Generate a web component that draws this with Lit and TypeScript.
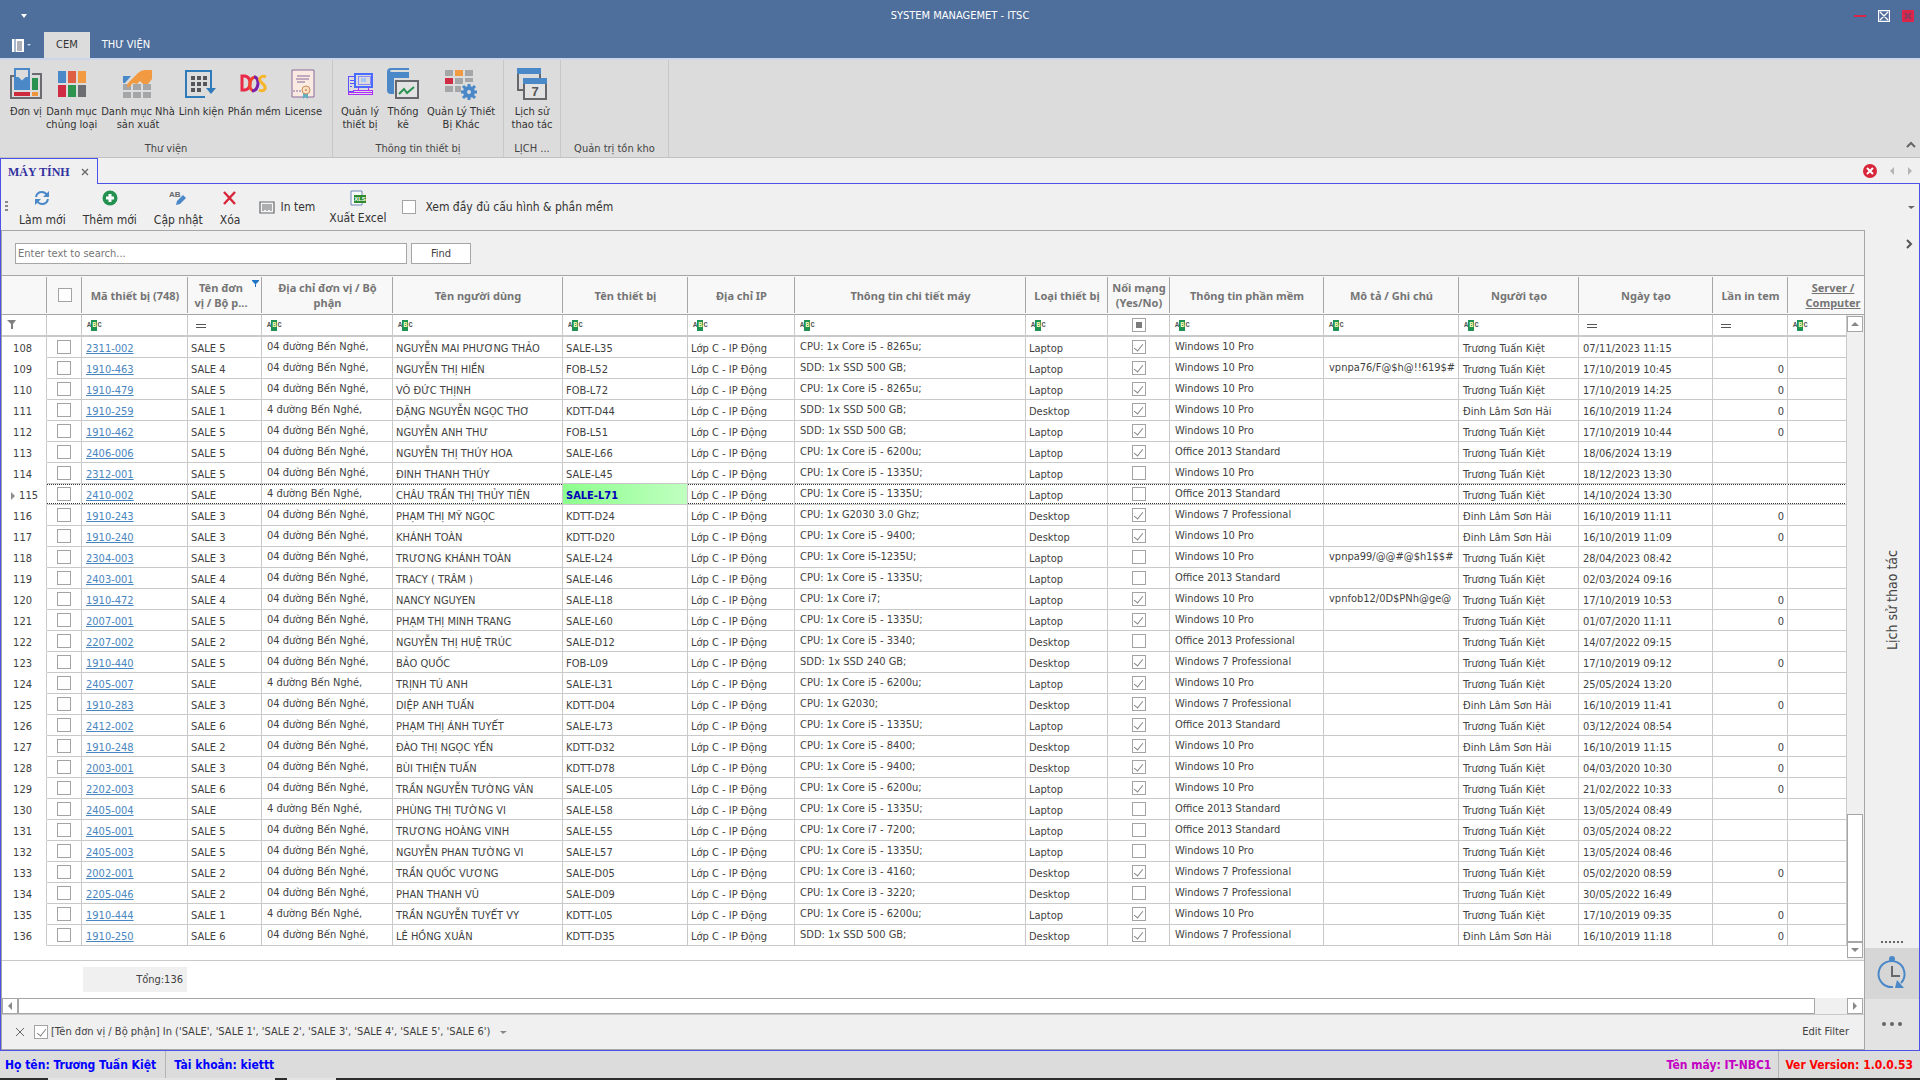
import { LitElement, html, css, svg, nothing } from "lit";
import { customElement } from "lit/decorators.js";
import { classMap } from "lit/directives/class-map.js";

interface Device {
  no: number; code: string; unit: string; addr: string; user: string; name: string;
  spec: string; kind: string; net: boolean; soft: string; note: string; by: string; at: string; prints: string;
}

const KIET = "Trương Tuấn Kiệt";
const HAI = "Đinh Lâm Sơn Hải";
const W10 = "Windows 10 Pro";
const W7 = "Windows 7 Professional";
const O13S = "Office 2013 Standard";
const O13P = "Office 2013 Professional";

type Raw = [string, string, string, string, string, string, string, number, string, string, string, string, string];
const RAW: Raw[] = [
  ["2311-002", "SALE 5", "04", "NGUYỄN MAI PHƯƠNG THẢO", "SALE-L35", "CPU: 1x Core i5 - 8265u;", "Laptop", 1, W10, "", KIET, "07/11/2023 11:15", ""],
  ["1910-463", "SALE 4", "04", "NGUYỄN THỊ HIỀN", "FOB-L52", "SDD: 1x SSD 500 GB;", "Laptop", 1, W10, "vpnpa76/F@$h@!!619$#", KIET, "17/10/2019 10:45", "0"],
  ["1910-479", "SALE 5", "04", "VÕ ĐỨC THỊNH", "FOB-L72", "CPU: 1x Core i5 - 8265u;", "Laptop", 1, W10, "", KIET, "17/10/2019 14:25", "0"],
  ["1910-259", "SALE 1", "4", "ĐẶNG NGUYỄN NGỌC THƠ", "KDTT-D44", "SDD: 1x SSD 500 GB;", "Desktop", 1, W10, "", HAI, "16/10/2019 11:24", "0"],
  ["1910-462", "SALE 5", "04", "NGUYỄN ANH THƯ", "FOB-L51", "SDD: 1x SSD 500 GB;", "Laptop", 1, W10, "", KIET, "17/10/2019 10:44", "0"],
  ["2406-006", "SALE 5", "04", "NGUYỄN THỊ THÚY HOA", "SALE-L66", "CPU: 1x Core i5 - 6200u;", "Laptop", 1, O13S, "", KIET, "18/06/2024 13:19", ""],
  ["2312-001", "SALE 5", "04", "ĐINH THANH THÚY", "SALE-L45", "CPU: 1x Core i5 - 1335U;", "Laptop", 0, W10, "", KIET, "18/12/2023 13:30", ""],
  ["2410-002", "SALE", "4", "CHÂU TRẦN THỊ THỦY TIÊN", "SALE-L71", "CPU: 1x Core i5 - 1335U;", "Laptop", 0, O13S, "", KIET, "14/10/2024 13:30", ""],
  ["1910-243", "SALE 3", "04", "PHẠM THỊ MỸ NGỌC", "KDTT-D24", "CPU: 1x G2030 3.0 Ghz;", "Desktop", 1, W7, "", HAI, "16/10/2019 11:11", "0"],
  ["1910-240", "SALE 3", "04", "KHÁNH TOÀN", "KDTT-D20", "CPU: 1x Core i5 - 9400;", "Desktop", 1, W10, "", HAI, "16/10/2019 11:09", "0"],
  ["2304-003", "SALE 3", "04", "TRƯƠNG KHÁNH TOÀN", "SALE-L24", "CPU: 1x Core i5-1235U;", "Laptop", 0, W10, "vpnpa99/@@#@$h1$$#", KIET, "28/04/2023 08:42", ""],
  ["2403-001", "SALE 4", "04", "TRACY ( TRÂM )", "SALE-L46", "CPU: 1x Core i5 - 1335U;", "Laptop", 0, O13S, "", KIET, "02/03/2024 09:16", ""],
  ["1910-472", "SALE 4", "04", "NANCY NGUYEN", "SALE-L18", "CPU: 1x Core i7;", "Laptop", 1, W10, "vpnfob12/0D$PNh@ge@", KIET, "17/10/2019 10:53", "0"],
  ["2007-001", "SALE 5", "04", "PHẠM THỊ MINH TRANG", "SALE-L60", "CPU: 1x Core i5 - 1335U;", "Laptop", 1, W10, "", KIET, "01/07/2020 11:11", "0"],
  ["2207-002", "SALE 2", "04", "NGUYỄN THỊ HUỆ TRÚC", "SALE-D12", "CPU: 1x Core i5 - 3340;", "Desktop", 0, O13P, "", KIET, "14/07/2022 09:15", ""],
  ["1910-440", "SALE 5", "04", "BẢO QUỐC", "FOB-L09", "SDD: 1x SSD 240 GB;", "Desktop", 1, W7, "", KIET, "17/10/2019 09:12", "0"],
  ["2405-007", "SALE", "4", "TRỊNH TÚ ANH", "SALE-L31", "CPU: 1x Core i5 - 6200u;", "Laptop", 1, W10, "", KIET, "25/05/2024 13:20", ""],
  ["1910-283", "SALE 3", "04", "DIỆP ANH TUẤN", "KDTT-D04", "CPU: 1x G2030;", "Desktop", 1, W7, "", HAI, "16/10/2019 11:41", "0"],
  ["2412-002", "SALE 6", "04", "PHẠM THỊ ÁNH TUYẾT", "SALE-L73", "CPU: 1x Core i5 - 1335U;", "Laptop", 1, O13S, "", KIET, "03/12/2024 08:54", ""],
  ["1910-248", "SALE 2", "04", "ĐÀO THỊ NGỌC YẾN", "KDTT-D32", "CPU: 1x Core i5 - 8400;", "Desktop", 1, W10, "", HAI, "16/10/2019 11:15", "0"],
  ["2003-001", "SALE 3", "04", "BÙI THIỆN TUẤN", "KDTT-D78", "CPU: 1x Core i5 - 9400;", "Desktop", 1, W10, "", KIET, "04/03/2020 10:30", "0"],
  ["2202-003", "SALE 6", "04", "TRẦN NGUYỄN TƯỜNG VÂN", "SALE-L05", "CPU: 1x Core i5 - 6200u;", "Laptop", 1, W10, "", KIET, "21/02/2022 10:33", "0"],
  ["2405-004", "SALE", "4", "PHÙNG THỊ TƯỜNG VI", "SALE-L58", "CPU: 1x Core i5 - 1335U;", "Laptop", 0, O13S, "", KIET, "13/05/2024 08:49", ""],
  ["2405-001", "SALE 5", "04", "TRƯƠNG HOÀNG VINH", "SALE-L55", "CPU: 1x Core i7 - 7200;", "Laptop", 0, O13S, "", KIET, "03/05/2024 08:22", ""],
  ["2405-003", "SALE 5", "04", "NGUYỄN PHAN TƯỜNG VI", "SALE-L57", "CPU: 1x Core i5 - 1335U;", "Laptop", 0, W10, "", KIET, "13/05/2024 08:46", ""],
  ["2002-001", "SALE 2", "04", "TRẦN QUỐC VƯƠNG", "SALE-D05", "CPU: 1x Core i3 - 4160;", "Desktop", 1, W7, "", KIET, "05/02/2020 08:59", "0"],
  ["2205-046", "SALE 2", "04", "PHAN THANH VŨ", "SALE-D09", "CPU: 1x Core i3 - 3220;", "Desktop", 0, W7, "", KIET, "30/05/2022 16:49", ""],
  ["1910-444", "SALE 1", "4", "TRẦN NGUYỄN TUYẾT VY", "KDTT-L05", "CPU: 1x Core i5 - 6200u;", "Laptop", 1, W10, "", KIET, "17/10/2019 09:35", "0"],
  ["1910-250", "SALE 6", "04", "LÊ HỒNG XUÂN", "KDTT-D35", "SDD: 1x SSD 500 GB;", "Desktop", 1, W7, "", HAI, "16/10/2019 11:18", "0"],
];
const DEVICES: Device[] = RAW.map((r, i) => ({
  no: 108 + i, code: r[0], unit: r[1], addr: `${r[2]} đường Bến Nghé,`, user: r[3], name: r[4], spec: r[5],
  kind: r[6], net: !!r[7], soft: r[8], note: r[9], by: r[10], at: r[11], prints: r[12],
}));
const CURRENT = 115;

const icon = (w: number, h: number, body: unknown) =>
  html`<svg width=${w} height=${h} viewBox="0 0 ${w} ${h}" aria-hidden="true">${body}</svg>`;

const ICONS = {
  unit: icon(32, 32, svg`
    <path d="M5 8H1v22h30V6h-9" fill="none" stroke="#6a6c70" stroke-width="2"/>
    <path d="M4 10h3l5 4 5-4h3v12H4z" fill="#4a88c8"/>
    <path d="M5 1h14v9h-3l-4 4-4-4H5z" fill="#dcdcdc" stroke="#4a88c8" stroke-width="2"/>
    <path d="M22 10h6v12h-6z" fill="#2a9250"/><path d="M4 24h16v4H4z" fill="#cf2b3f"/><path d="M22 24h6v4h-6z" fill="#f0953c"/>`),
  category: icon(28, 28, svg`
    <path d="M0 1h8v12H0z" fill="#4a88c8"/><path d="M10 1h8v12h-8z" fill="#de5f43"/><path d="M20 1h8v12h-8z" fill="#f29a42"/>
    <path d="M0 15h8v12H0z" fill="#cf2b43"/><path d="M10 15h8v12h-8z" fill="#2e9550"/><path d="M20 15h8v12h-8z" fill="#6b6d70"/>`),
  maker: icon(32, 30, svg`
    <path d="M1 7h8L3 14H1z" fill="#4a88c8"/>
    <path d="M1 15h8v6H1zM11 15h8v6h-8zM21 15h8v6h-8zM1 23h8v6H1zM11 23h8v6h-8zM21 23h8v6h-8z" fill="#a5a6a8"/>
    <path d="M5 17q0-2 2-4L16 4q3-3 7-3h7v9l-4 5h-5l-3-3-3 3-4-1-4 4q-2 1-2-1z" fill="#f29a42"/>`),
  part: icon(32, 28, svg`
    <path d="M20 27H1V1h25v19" fill="none" stroke="#2f7ab8" stroke-width="2"/><path d="M21 18h10l-5 6z" fill="#2f7ab8"/>
    <path d="M6 6h4v4H6zM12 6h4v4h-4zM18 6h4v4h-4zM6 12h4v4H6zM12 12h4v4h-4zM18 12h4v4h-4zM6 18h4v4H6zM12 18h4v4h-4z" fill="#55565a"/>`),
  software: icon(28, 20, svg`
    <g fill="none" stroke-width="3"><path d="M2 2v14h3q5-1 5-7t-5-7z" stroke="#e82a48"/>
    <path d="M16 3q-5 0-6 6-1 7 4 8" stroke="#f0452c"/><path d="M12 17q5 0 6-7 0-7-4-7" stroke="#7a1fa8"/>
    <path d="M26 3q-4-2-6 1-1 3 2 5 4 3 3 6-2 3-6 1" stroke="#f7b52c"/></g>`),
  license: icon(24, 30, svg`
    <path d="M1 1h22v27H1z" fill="#f9ebe2" stroke="#8a6a9a"/><path d="M6 7h13M5 10h13M6 13h8" stroke="#8a6a9a"/>
    <path d="M2 22h9" stroke="#8a6a9a" stroke-dasharray="2 1"/><path d="M12 24h5v6l-3-2-2 2z" fill="#5fb0c4"/>
    <circle cx="15" cy="21" r="4" fill="#fbe0c4" stroke="#c98f5c"/><circle cx="15" cy="21" r="1" fill="#c98f5c"/>`),
  manage: icon(28, 24, svg`
    <g fill="none" shape-rendering="crispEdges"><path d="M8 4H2v15h6M4 8h4M4 11h4M4 14h2" stroke="#5b50ff" stroke-width="1"/>
    <path d="M9 2h17v13H9z" stroke="#4a6bff" stroke-width="2"/><path d="M12 4h12v8H12z" stroke="#8a8aff"/>
    <path d="M12 15v3M22 15v3M7 18h19v4H2v-2h24" stroke="#b02cff" stroke-width="1"/></g><path d="M15 6h5v4h-5z" fill="#a8c4f4"/>`),
  stats: icon(32, 32, svg`
    <path d="M0 4q0-4 4-4h18v2H5q-2 0-2 1t2 1h17v6H7v16H4q-4 0-4-4z" fill="#4a88c8"/>
    <path d="M9 13h22v17H9z" fill="#e2e2e2" stroke="#65676b" stroke-width="2"/>
    <path d="M12 26l5-5 3 4 7-6" fill="none" stroke="#2a9250" stroke-width="2"/>`),
  other: icon(32, 32, svg`
    <path d="M0 2h8v6H0zM20 2h8v6h-8zM10 10h8v6h-8zM20 10h8v4h-8zM0 18h8v6H0zM10 18h6v6h-6z" fill="#a5a6a8"/>
    <path d="M10 2h8v6h-8z" fill="#f29a42"/><path d="M0 10h8v6H0z" fill="#cf2b43"/>
    <g stroke="#4a88c8" fill="none"><circle cx="24" cy="24" r="4" stroke-width="4"/>
    <path d="M24 16v4M24 28v4M16 24h4M28 24h4M18 18l3 3M27 27l3 3M30 18l-3 3M21 27l-3 3" stroke-width="3"/></g>`),
  history: icon(32, 32, svg`
    <path d="M2 6v16h7M24 6v4" fill="none" stroke="#65676b" stroke-width="2"/><path d="M1 0h24v6H1z" fill="#4a88c8"/>
    <path d="M8 13h22v18H8z" fill="#e2e2e2" stroke="#65676b" stroke-width="2"/><path d="M7 10h24v6H7z" fill="#4a88c8"/>
    <text x="19" y="28" text-anchor="middle" font-family="Liberation Sans" font-weight="700" font-size="13" fill="#55565a">7</text>`),
  refresh: icon(16, 16, svg`
    <g fill="none" stroke="#4a88c8" stroke-width="2"><path d="M2 7q1-5 6-5 3 0 5 3"/><path d="M14 9q-1 5-6 5-3 0-5-3"/></g>
    <path d="M15 1v6H9zM1 15V9h6z" fill="#4a88c8"/>`),
  add: icon(16, 16, svg`<circle cx="8" cy="8" r="7.5" fill="#239150"/><path d="M8 4v8M4 8h8" stroke="#fff" stroke-width="3"/>`),
  edit: icon(18, 16, svg`
    <text x="0" y="7" font-family="Liberation Sans" font-weight="700" font-size="8" fill="#66686c">AB</text>
    <path d="M7 15l1-4 6-6 3 3-6 6z" fill="#4a88c8"/>`),
  remove: icon(14, 16, svg`<path d="M1 2l11 12M12 2L1 14" stroke="#d8253a" stroke-width="2.4"/>`),
  barcode: icon(16, 13, svg`
    <path d="M1 1h14v11H1z" fill="#f4f4f4" stroke="#66686c" stroke-width="1.2"/><path d="M4 3v7M6 3v6M8 3v7M10 3v6M12 3v7" stroke="#66686c"/>`),
  excel: icon(16, 16, svg`
    <path d="M1 1h11v14H1z" fill="#fbfbfb" stroke="#6f86b4"/><path d="M4 5h12v8H4z" fill="#2e8b2e"/>
    <text x="10" y="11" text-anchor="middle" font-family="Liberation Sans" font-weight="700" font-size="6" fill="#fff">XLS</text>`),
  clock: icon(32, 34, svg`
    <path d="M17 31a13 13 0 1 1 8-4" fill="none" stroke="#4a88c8" stroke-width="2"/>
    <circle cx="16" cy="3" r="3" fill="#4a88c8"/><path d="M19 32l9 0-7-8z" fill="#4a88c8"/>
    <path d="M16 10v10h8" fill="none" stroke="#66686c" stroke-width="2"/>`),
};

const caret = (dir: "up" | "down" | "left" | "right") => {
  const d = { up: "M0 6h8L4 2z", down: "M0 2h8L4 6z", left: "M6 0v8L2 4z", right: "M2 0v8l4-4z" }[dir];
  return icon(8, 8, svg`<path d=${d} fill="currentColor"/>`);
};

const GROUPS: { label: string; cls: string; items: [unknown, string[]][] }[] = [
  { label: "Thư viện", cls: "g-lib", items: [
    [ICONS.unit, ["Đơn vị"]], [ICONS.category, ["Danh mục", "chủng loại"]], [ICONS.maker, ["Danh mục Nhà", "sản xuất"]],
    [ICONS.part, ["Linh kiện"]], [ICONS.software, ["Phần mềm"]], [ICONS.license, ["License"]]] },
  { label: "Thông tin thiết bị", cls: "g-info", items: [
    [ICONS.manage, ["Quản lý", "thiết bị"]], [ICONS.stats, ["Thống", "kê"]], [ICONS.other, ["Quản Lý Thiết", "Bị Khác"]]] },
  { label: "LỊCH ...", cls: "g-hist", items: [[ICONS.history, ["Lịch sử", "thao tác"]]] },
  { label: "Quản trị tồn kho", cls: "g-stock", items: [] },
];

const COLS = ["c-ind", "c-chk", "c-code", "c-unit", "c-addr", "c-user", "c-name", "c-ip", "c-spec", "c-kind", "c-net", "c-soft", "c-note", "c-by", "c-at", "c-prn", "c-srv", "c-bar"];

@customElement("app-root")
export class AppRoot extends LitElement {
  static styles = css`
    :host { display: block; font: 11px/16px "DejaVu Sans Condensed", "Noto Sans", sans-serif; color: #3f3f3f; }
    * { box-sizing: border-box; }
    svg { display: block; flex: none; }
    button { font: inherit; color: inherit; background: none; border: 0; padding: 0; cursor: default; }
    .app { min-height: 100vh; display: flex; flex-direction: column; background: #f0f0f0; }
    .row { display: flex; align-items: center; }
    .grow { flex: 1; }

    .title { height: 32px; background: #4e6e9c; color: #fff; display: grid; grid-template-columns: 1fr auto 1fr; align-items: center; padding: 0 6px; }
    .title h1 { margin: 0; font: inherit; }
    .custom { justify-self: start; padding: 0 14px; }
    .wins { justify-content: flex-end; gap: 12px; }
    .tabs { height: 26px; background: #4e6e9c; color: #fff; display: flex; align-items: stretch; }
    .filemenu { width: 44px; display: flex; align-items: center; gap: 3px; padding-left: 12px; }
    .tab { padding: 0 12px; }
    .tab.on { background: #dcdcdc; color: #333; }
    .ribbon { display: flex; height: 100px; background: #dcdcdc; border-top: 2px solid #cbd6ea; border-bottom: 1px solid #c2c2c2; }
    .group { display: flex; flex-direction: column; justify-content: space-between; border-right: 1px solid #c8c8c8; padding: 7px 0 0; }
    .group .items { display: flex; justify-content: center; }
    .g-stock { width: 108px; }
    .g-hist { width: 57px; }
    .g-info { width: 171px; }
    .g-lib { width: 333px; }
    .big { display: flex; flex-direction: column; align-items: center; padding: 0 4px; line-height: 13px; white-space: nowrap; color: #333; }
    .g-lib .big { padding: 0 2px; }
    .pic { height: 34px; display: flex; align-items: center; margin-bottom: 4px; }
    .glabel { text-align: center; line-height: 16px; color: #444; white-space: nowrap; }
    .collapse { margin-left: auto; align-self: flex-end; padding: 8px 4px; }

    .docs { display: flex; align-items: stretch; height: 26px; border-bottom: 1px solid #4c52e6; }
    .doc { display: flex; align-items: center; gap: 11px; width: 98px; padding-left: 7px; height: 26px; background: #f0f0f0; border: 1px solid #4c52e6; border-bottom: 0; font: 700 12px/16px "Liberation Serif", serif; color: #3232a0; }
    .docnav { margin-left: auto; gap: 10px; padding-right: 6px; color: #b4b4b4; }

    .work { flex: 1; display: flex; flex-direction: column; border: 1px solid #4c52e6; border-top: 0; }
    .tools { display: flex; align-items: center; height: 46px; font-size: 12px; color: #333; padding: 0 4px 0 4px; }
    .tool { display: flex; flex-direction: column; align-items: center; gap: 6px; padding: 4px 9px 0 8px; white-space: nowrap; }
    .tool.tight { gap: 4px; padding: 2px 8px 0; }
    .tool.wide { flex-direction: row; gap: 5px; padding: 0 6px 0 10px; }
    .grip { width: 3px; height: 12px; margin-right: 3px; background: repeating-linear-gradient(#8a8a8a 0 2px, transparent 2px 4px); }
    .opt { display: flex; align-items: center; gap: 9px; margin-left: 8px; }
    .main { flex: 1; display: flex; }
    .gridbox { flex: 1; min-width: 0; display: flex; flex-direction: column; border: 1px solid #a6a6a6; }

    .search { display: flex; gap: 4px; padding: 12px 13px 11px; }
    .search input { width: 392px; height: 21px; border: 1px solid #a6a6a6; background: #fff; font: inherit; padding: 0 2px; color: #444; border-radius: 0; outline: 0; }
    .search input::placeholder { color: #757575; }
    .find { width: 60px; height: 21px; border: 1px solid #a6a6a6; background: #fff; }

    .ck { appearance: none; width: 14px; height: 14px; margin: 0; border: 1px solid #a3a3a3; background: #fff; display: grid; place-content: center; flex: none; }
    .ck:checked::after { content: ""; width: 4px; height: 8px; border: solid #808080; border-width: 0 1px 1px 0; transform: rotate(38deg); margin-top: -2px; }
    .ck:indeterminate::after { content: ""; width: 6px; height: 6px; background: #7c7c7c; }

    table { width: 100%; table-layout: fixed; border-spacing: 0; background: #fff; border-top: 1px solid #a6a6a6; }
    .c-ind { width: 45px; } .c-chk { width: 35px; } .c-code { width: 106px; } .c-unit { width: 74px; } .c-addr { width: 131px; }
    .c-user { width: 170px; } .c-name { width: 125px; } .c-ip { width: 107px; } .c-kind { width: 82px; } .c-net { width: 62px; }
    .c-soft { width: 154px; } .c-note { width: 135px; } .c-by { width: 120px; } .c-at { width: 134px; } .c-prn { width: 75px; }
    .c-srv { width: 59px; } .c-bar { width: 17px; }
    th { height: 39px; padding: 0 3px; border-bottom: 1px solid #a6a6a6; font: 700 11px/15px "Noto Sans", sans-serif; color: #757575;
      background: linear-gradient(#a6a6a6, #a6a6a6) right center / 1px 36px no-repeat #f8f8f8; }
    th .ck, td .ck { margin: 0 auto; }
    th.unit { position: relative; padding: 0 12px 0 4px; }
    th.unit svg { position: absolute; top: 4px; right: 3px; }
    th.srv { text-decoration: underline; padding: 0 3px 0 17px; background-image: none; }
    td { height: 21px; padding: 3px 3px 0; border-right: 1px solid #c9c9c9; border-bottom: 1px solid #c9c9c9; line-height: 17px; white-space: nowrap; overflow: hidden; }
    td.in { padding: 3px 4px 0; }
    td.memo { padding: 0 5px; line-height: 19px; vertical-align: top; }
    td.box { padding: 0; }
    td.num { text-align: right; }
    td.ind { border-bottom-color: #fff; }
    td.ind .row { justify-content: flex-end; gap: 2px; padding-right: 11px; }
    tr.cur td.ind .row { padding-right: 5px; }
    tr.cur svg { color: #8b8b8b; }
    td a { color: #4a86c0; text-decoration: underline; }
    tr.flt td { height: 22px; border-bottom: 2px solid #c9c9c9; padding: 0 5px; }
    tr.flt td.box { padding: 0; }
    tr.flt td.bar { padding: 1px 0 0; background: #f0f0f0; border: 0; vertical-align: top; }
    tr.end td { height: 14px; border: 0; padding: 0; }
    tr.cur td + td { background: repeating-linear-gradient(90deg, #333 0 1px, transparent 1px 2px) top / 100% 1px no-repeat, repeating-linear-gradient(90deg, #333 0 1px, transparent 1px 2px) bottom / 100% 1px no-repeat; }
    tr.cur td.name { background: linear-gradient(90deg, #8dff8d, #c0ffc0); color: #0000b8; font-weight: 700; }
    .abc { display: inline-flex; align-items: center; font: 700 7px/11px "Liberation Mono", monospace; color: #555; vertical-align: middle; }
    .abc b { background: #1f9150; color: #fff7b0; padding: 0 1px; }
    .eq { display: inline-block; width: 10px; height: 4px; margin-left: 3px; border: solid #555; border-width: 1px 0; vertical-align: middle; }

    .vbar { display: flex; flex-direction: column; height: 642px; }
    .sbtn { width: 16px; height: 16px; border: 1px solid #a6a6a6; background: #fff; display: grid; place-content: center; color: #888; flex: none; }
    .vtrack { flex: 1; display: flex; flex-direction: column; justify-content: flex-end; }
    .vthumb { width: 16px; height: 21%; background: #fff; border: 1px solid #a6a6a6; }
    .sum { display: flex; height: 38px; background: #fff; border-top: 1px solid #c9c9c9; padding: 6px 0 6px 81px; }
    .sum div { width: 104px; background: #f0f0f0; text-align: right; padding: 0 4px; line-height: 26px; }
    .hbar { display: flex; height: 16px; padding: 0 1px 0 0; }
    .htrack { flex: 1; padding-right: 32px; }
    .hthumb { height: 16px; background: #fff; border: 1px solid #a6a6a6; }
    .filter { flex: 1; min-height: 35px; display: flex; align-items: center; border-top: 1px solid #c9c9c9; padding: 0 15px 0 12px; }
    .filter .opt { margin-left: 8px; gap: 3px; }
    .filter .drop { margin-left: 10px; }

    .side { width: 54px; display: flex; flex-direction: column; align-items: center; background: #f0f0f0; }
    .side .open { align-self: flex-end; padding: 9px 6px; }
    .vert { writing-mode: vertical-rl; transform: rotate(180deg); font-size: 14px; margin: auto 0; color: #444; line-height: 18px; }
    .dots { width: 23px; height: 2px; margin-bottom: 5px; background: repeating-linear-gradient(90deg, #666 0 2px, transparent 2px 4px); }
    .tile { width: 100%; height: 51px; display: grid; place-content: center; background: #d6d6d6; }
    .tile.more { background: #e3e3e3; }

    .status { display: flex; height: 27px; background: #dcdcdc; font-weight: 700; font-size: 12px; line-height: 29px; color: #00f; }
    .status span { padding: 0 9px 0 5px; border-right: 1px solid #b4b4b4; }
    .status span.acct { padding: 0 8px; border: 0; }
    .status .pc { margin-left: auto; color: #c400c4; padding: 0 7px; }
    .status .ver { color: #f00; border: 0; padding: 0 7px 0 6px; }
    .edge { height: 2px; background: linear-gradient(90deg, #2c2c2c 48px, #e4e4e4 48px 275px, #2c2c2c 275px 287px, #e4e4e4 287px 336px, #2c2c2c 336px); }
  `;

  private abc() { return html`<span class="abc">A<b>B</b>C</span>`; }
  private eq() { return html`<span class="eq"></span>`; }

  private renderRow(d: Device) {
    const cur = d.no === CURRENT;
    return html`<tr class=${classMap({ cur })}>
      <td class="ind"><div class="row">${cur ? caret("right") : nothing}<span>${d.no}</span></div></td>
      <td class="box"><input class="ck" type="checkbox" aria-label="Chọn ${d.code}"></td>
      <td class="in"><a href="#${d.code}">${d.code}</a></td>
      <td>${d.unit}</td>
      <td class="memo">${d.addr}</td>
      <td>${d.user}</td>
      <td class="name">${d.name}</td>
      <td>Lớp C - IP Động</td>
      <td class="memo">${d.spec}</td>
      <td>${d.kind}</td>
      <td class="box"><input class="ck" type="checkbox" aria-label="Nối mạng ${d.code}" .checked=${d.net}></td>
      <td class="memo">${d.soft}</td>
      <td class="memo">${d.note}</td>
      <td class="in">${d.by}</td>
      <td class="in">${d.at}</td>
      <td class="num">${d.prints}</td>
      <td></td>
    </tr>`;
  }

  render() {
    return html`<div class="app">
      <header>
        <div class="title">
          <button class="custom" aria-label="Tùy chỉnh">${icon(8, 6, svg`<path d="M1 1h6L4 5z" fill="#fff"/>`)}</button>
          <h1>SYSTEM MANAGEMET - ITSC</h1>
          <div class="row wins">
            <button aria-label="Thu nhỏ">${icon(12, 12, svg`<path d="M0 6h12" stroke="#d8254a" stroke-width="2"/>`)}</button>
            <button aria-label="Phục hồi">${icon(12, 12, svg`<path d="M.5.5h11v11H.5zM2 2l8 8M10 2l-8 8" fill="none" stroke="#fff" stroke-width="1.3"/>`)}</button>
            <button aria-label="Đóng">${icon(12, 12, svg`<path d="M0 0h12v12H0z" fill="#dc2548"/><path d="M3 3l6 6M9 3L3 9" stroke="#8c3a62" stroke-width="2"/>`)}</button>
          </div>
        </div>
        <nav class="tabs">
          <button class="filemenu" aria-label="Menu">
            ${icon(12, 13, svg`<path d="M0 0h12v13H0z" fill="#fff"/><path d="M3 0v13" stroke="#4e6e9c"/><path d="M5 3h5M5 5h5M5 7h5M5 9h5M5 11h5" stroke="#5c6470"/>`)}
            ${icon(4, 4, svg`<path d="M0 1h4L2 3z" fill="#c9d4e6"/>`)}
          </button>
          <button class="tab on">CEM</button>
          <button class="tab">THƯ VIỆN</button>
        </nav>
      </header>
      <section class="ribbon">
        ${GROUPS.map(g => html`<div class="group ${g.cls}">
          <div class="items">${g.items.map(([pic, lines]) => html`<button class="big"><span class="pic">${pic}</span>${lines.map(l => html`<span>${l}</span>`)}</button>`)}</div>
          <div class="glabel">${g.label}</div>
        </div>`)}
        <button class="collapse" aria-label="Thu gọn">${icon(10, 8, svg`<path d="M1 6l4-4 4 4" fill="none" stroke="#666" stroke-width="2"/>`)}</button>
      </section>

      <div class="docs">
        <div class="doc"><span>MÁY TÍNH</span><button aria-label="Đóng thẻ">${icon(8, 8, svg`<path d="M1 1l6 6M7 1L1 7" stroke="#666" stroke-width="1.3"/>`)}</button></div>
        <div class="row docnav">
          <button aria-label="Đóng tất cả">${icon(16, 16, svg`<circle cx="8" cy="8" r="7" fill="#d8253a"/><path d="M5 5l6 6M11 5l-6 6" stroke="#fff" stroke-width="2"/>`)}</button>
          ${caret("left")}${caret("right")}
        </div>
      </div>

      <main class="work">
        <div class="tools">
          <span class="grip"></span>
          <button class="tool">${ICONS.refresh}Làm mới</button>
          <button class="tool">${ICONS.add}Thêm mới</button>
          <button class="tool">${ICONS.edit}Cập nhật</button>
          <button class="tool">${ICONS.remove}Xóa</button>
          <button class="tool wide">${ICONS.barcode}In tem</button>
          <button class="tool tight">${ICONS.excel}Xuất Excel</button>
          <label class="opt"><input class="ck" type="checkbox">Xem đầy đủ cấu hình &amp; phần mềm</label>
          <span class="grow"></span>
          ${icon(7, 5, svg`<path d="M0 1h7L3 4z" fill="#666"/>`)}
        </div>
        <div class="main">
          <section class="gridbox">
            <form class="search" @submit=${(e: Event) => e.preventDefault()}>
              <input type="text" placeholder="Enter text to search..." aria-label="Tìm kiếm">
              <button class="find">Find</button>
            </form>
            <table>
              <colgroup>${COLS.map(c => html`<col class=${c}>`)}</colgroup>
              <thead><tr>
                <th></th>
                <th><input class="ck" type="checkbox" aria-label="Chọn tất cả"></th>
                <th>Mã thiết bị (748)</th>
                <th class="unit">Tên đơn<br>vị / Bộ p...${icon(7, 7, svg`<path d="M0 0h7v1L4 4v3H3V4L0 1z" fill="#1f74c4"/>`)}</th>
                <th>Địa chỉ đơn vị / Bộ<br>phận</th>
                <th>Tên người dùng</th><th>Tên thiết bị</th><th>Địa chỉ IP</th><th>Thông tin chi tiết máy</th><th>Loại thiết bị</th>
                <th>Nối mạng<br>(Yes/No)</th><th>Thông tin phần mềm</th><th>Mô tả / Ghi chú</th><th>Người tạo</th><th>Ngày tạo</th><th>Lần in tem</th>
                <th class="srv" colspan="2">Server /<br>Computer</th>
              </tr></thead>
              <tbody>
                <tr class="flt">
                  <td class="ind">${icon(10, 10, svg`<path d="M0 0h9L6 4v5H4V4z" fill="#808080"/>`)}</td>
                  <td></td>
                  <td>${this.abc()}</td><td>${this.eq()}</td><td>${this.abc()}</td><td>${this.abc()}</td><td>${this.abc()}</td><td>${this.abc()}</td>
                  <td>${this.abc()}</td><td>${this.abc()}</td>
                  <td class="box"><input class="ck" type="checkbox" aria-label="Lọc nối mạng" .indeterminate=${true}></td>
                  <td>${this.abc()}</td><td>${this.abc()}</td><td>${this.abc()}</td><td>${this.eq()}</td><td>${this.eq()}</td><td>${this.abc()}</td>
                  <td class="bar" rowspan=${DEVICES.length + 2}>
                    <div class="vbar">
                      <button class="sbtn" aria-label="Lên">${caret("up")}</button>
                      <div class="vtrack"><div class="vthumb"></div></div>
                      <button class="sbtn" aria-label="Xuống">${caret("down")}</button>
                    </div>
                  </td>
                </tr>
                ${DEVICES.map(d => this.renderRow(d))}
                <tr class="end"><td colspan="17"></td></tr>
              </tbody>
            </table>
            <div class="sum"><div>Tổng:136</div></div>
            <div class="hbar">
              <button class="sbtn" aria-label="Trái">${caret("left")}</button>
              <div class="htrack"><div class="hthumb"></div></div>
              <button class="sbtn" aria-label="Phải">${caret("right")}</button>
            </div>
            <div class="filter">
              <button aria-label="Xóa bộ lọc">${icon(12, 12, svg`<path d="M2 2l8 8M10 2l-8 8" stroke="#666"/>`)}</button>
              <label class="opt"><input class="ck" type="checkbox" .checked=${true}>[Tên đơn vị / Bộ phận] In ('SALE', 'SALE 1', 'SALE 2', 'SALE 3', 'SALE 4', 'SALE 5', 'SALE 6')</label>
              <button class="drop" aria-label="Bộ lọc gần đây">${icon(7, 5, svg`<path d="M0 1h7L3 4z" fill="#888"/>`)}</button>
              <span class="grow"></span>
              <button>Edit Filter</button>
            </div>
          </section>
          <aside class="side">
            <button class="open" aria-label="Mở rộng">${icon(8, 10, svg`<path d="M2 1l4 4-4 4" fill="none" stroke="#555" stroke-width="2"/>`)}</button>
            <span class="vert">Lịch sử thao tác</span>
            <span class="dots"></span>
            <button class="tile" aria-label="Lịch sử">${ICONS.clock}</button>
            <button class="tile more" aria-label="Thêm">${icon(20, 5, svg`<circle cx="2" cy="2" r="2" fill="#666"/><circle cx="10" cy="2" r="2" fill="#666"/><circle cx="18" cy="2" r="2" fill="#666"/>`)}</button>
          </aside>
        </div>
      </main>

      <footer>
        <div class="status">
          <span>Họ tên: Trương Tuấn Kiệt</span><span class="acct">Tài khoản: kiettt</span>
          <span class="pc">Tên máy: IT-NBC1</span><span class="ver">Ver Version: 1.0.0.53</span>
        </div>
        <div class="edge"></div>
      </footer>
    </div>`;
  }
}
